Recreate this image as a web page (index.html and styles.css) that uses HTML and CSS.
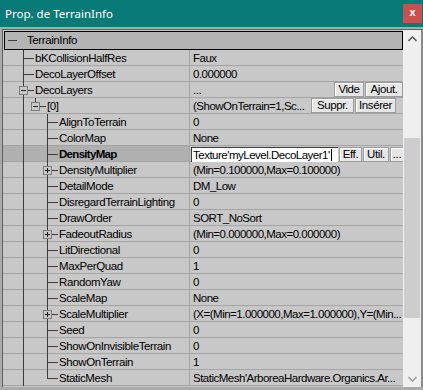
FILE: index.html
```html
<!DOCTYPE html>
<html lang="fr">

<head>
    <meta charset="UTF-8">
    <title>Prop. de TerrainInfo</title>
    <link rel="stylesheet" href="styles.css">
</head>

<body>
    <div class="window">
        <div class="titlebar">
            <span class="title">Prop. de TerrainInfo</span>
            <span class="close">x</span>
        </div>

        <div class="frame">
            <div class="grid">
                <div class="list">
                    <div class="category"><span class="collapse"></span>TerrainInfo</div>

                    <div class="row">
                        <div class="name"><span class="g t"></span><span class="stub"></span><span class="lbl">bKCollisionHalfRes</span></div>
                        <div class="val"><span class="vtext">Faux</span></div>
                    </div>
                    <div class="row">
                        <div class="name"><span class="g t"></span><span class="stub"></span><span class="lbl">DecoLayerOffset</span></div>
                        <div class="val"><span class="vtext">0.000000</span></div>
                    </div>
                    <div class="row">
                        <div class="name"><span class="g t"><span class="box"></span></span><span class="stub"></span><span class="lbl">DecoLayers</span></div>
                        <div class="val"><span class="vtext">...</span><span class="btn w-vide">Vide</span><span class="btn w-ajout">Ajout.</span></div>
                    </div>
                    <div class="row">
                        <div class="name"><span class="g v"></span><span class="g l"><span class="box"></span></span><span class="stub"></span><span class="lbl">[0]</span></div>
                        <div class="val"><span class="vtext">(ShowOnTerrain=1,Sc...</span><span class="btn w-suppr">Suppr.</span><span class="btn w-inserer">Insérer</span></div>
                    </div>
                    <div class="row">
                        <div class="name"><span class="g v"></span><span class="g"></span><span class="g t"></span><span class="stub"></span><span class="lbl">AlignToTerrain</span></div>
                        <div class="val"><span class="vtext">0</span></div>
                    </div>
                    <div class="row">
                        <div class="name"><span class="g v"></span><span class="g"></span><span class="g t"></span><span class="stub"></span><span class="lbl">ColorMap</span></div>
                        <div class="val"><span class="vtext">None</span></div>
                    </div>
                    <div class="row selected">
                        <div class="name"><span class="g v"></span><span class="g"></span><span class="g t"></span><span class="stub"></span><span class="lbl">DensityMap</span></div>
                        <div class="val">
                            <span class="edit">Texture'myLevel.DecoLayer1'<span class="caret"></span></span>
                            <span class="btn w-eff">Eff.</span><span class="btn w-util">Util.</span><span class="btn w-dots">...</span>
                        </div>
                    </div>
                    <div class="row">
                        <div class="name"><span class="g v"></span><span class="g"></span><span class="g t"><span class="box plus"></span></span><span class="stub"></span><span class="lbl">DensityMultiplier</span></div>
                        <div class="val"><span class="vtext">(Min=0.100000,Max=0.100000)</span></div>
                    </div>
                    <div class="row">
                        <div class="name"><span class="g v"></span><span class="g"></span><span class="g t"></span><span class="stub"></span><span class="lbl">DetailMode</span></div>
                        <div class="val"><span class="vtext">DM_Low</span></div>
                    </div>
                    <div class="row">
                        <div class="name"><span class="g v"></span><span class="g"></span><span class="g t"></span><span class="stub"></span><span class="lbl">DisregardTerrainLighting</span></div>
                        <div class="val"><span class="vtext">0</span></div>
                    </div>
                    <div class="row">
                        <div class="name"><span class="g v"></span><span class="g"></span><span class="g t"></span><span class="stub"></span><span class="lbl">DrawOrder</span></div>
                        <div class="val"><span class="vtext">SORT_NoSort</span></div>
                    </div>
                    <div class="row">
                        <div class="name"><span class="g v"></span><span class="g"></span><span class="g t"><span class="box plus"></span></span><span class="stub"></span><span class="lbl">FadeoutRadius</span></div>
                        <div class="val"><span class="vtext">(Min=0.000000,Max=0.000000)</span></div>
                    </div>
                    <div class="row">
                        <div class="name"><span class="g v"></span><span class="g"></span><span class="g t"></span><span class="stub"></span><span class="lbl">LitDirectional</span></div>
                        <div class="val"><span class="vtext">0</span></div>
                    </div>
                    <div class="row">
                        <div class="name"><span class="g v"></span><span class="g"></span><span class="g t"></span><span class="stub"></span><span class="lbl">MaxPerQuad</span></div>
                        <div class="val"><span class="vtext">1</span></div>
                    </div>
                    <div class="row">
                        <div class="name"><span class="g v"></span><span class="g"></span><span class="g t"></span><span class="stub"></span><span class="lbl">RandomYaw</span></div>
                        <div class="val"><span class="vtext">0</span></div>
                    </div>
                    <div class="row">
                        <div class="name"><span class="g v"></span><span class="g"></span><span class="g t"></span><span class="stub"></span><span class="lbl">ScaleMap</span></div>
                        <div class="val"><span class="vtext">None</span></div>
                    </div>
                    <div class="row">
                        <div class="name"><span class="g v"></span><span class="g"></span><span class="g t"><span class="box plus"></span></span><span class="stub"></span><span class="lbl">ScaleMultiplier</span></div>
                        <div class="val"><span class="vtext">(X=(Min=1.000000,Max=1.000000),Y=(Min...</span></div>
                    </div>
                    <div class="row">
                        <div class="name"><span class="g v"></span><span class="g"></span><span class="g t"></span><span class="stub"></span><span class="lbl">Seed</span></div>
                        <div class="val"><span class="vtext">0</span></div>
                    </div>
                    <div class="row">
                        <div class="name"><span class="g v"></span><span class="g"></span><span class="g t"></span><span class="stub"></span><span class="lbl">ShowOnInvisibleTerrain</span></div>
                        <div class="val"><span class="vtext">0</span></div>
                    </div>
                    <div class="row">
                        <div class="name"><span class="g v"></span><span class="g"></span><span class="g t"></span><span class="stub"></span><span class="lbl">ShowOnTerrain</span></div>
                        <div class="val"><span class="vtext">1</span></div>
                    </div>
                    <div class="row">
                        <div class="name"><span class="g v"></span><span class="g"></span><span class="g l"></span><span class="stub"></span><span class="lbl">StaticMesh</span></div>
                        <div class="val"><span class="vtext">StaticMesh'ArboreaHardware.Organics.Ar...</span></div>
                    </div>
                </div>

                <div class="scroll">
                    <div class="arrow">
                        <svg width="9" height="6" viewBox="0 0 9 6"><polyline points="0.5,5 4.5,1 8.5,5" fill="none" stroke="#606060" stroke-width="1.6"/></svg>
                    </div>
                    <div class="track"><div class="thumb"></div></div>
                    <div class="arrow">
                        <svg width="9" height="6" viewBox="0 0 9 6"><polyline points="0.5,1 4.5,5 8.5,1" fill="none" stroke="#a0a0a0" stroke-width="1.6"/></svg>
                    </div>
                </div>
            </div>
        </div>
    </div>
</body>

</html>
```

FILE: styles.css
```css
* {
    margin: 0px;
    padding: 0px;
    box-sizing: border-box;
}

body {
    width: 423px;
    height: 390px;
    overflow: hidden;
    background-color: #b4b4b4;
    font-family: "Liberation Sans", Arial, sans-serif;
    font-size: 11.5px;
    letter-spacing: -0.4px;
    color: #000;
}

.window {
    width: 423px;
    height: 390px;
    display: flex;
    flex-direction: column;
}

/* barre de titre */
.titlebar {
    height: 27px;
    flex: none;
    background-color: #087a78;
    color: #fff;
    display: flex;
    justify-content: space-between;
    align-items: flex-start;
}

.title {
    font-family: "Noto Sans", "Liberation Sans", sans-serif;
    font-size: 11.5px;
    letter-spacing: 0px;
    line-height: 27px;
    padding-left: 5px;
}

.close {
    width: 19px;
    height: 19px;
    margin-top: 4px;
    margin-right: 1px;
    background-color: #c75050;
    color: #fff;
    font-weight: bold;
    font-size: 11px;
    letter-spacing: 0px;
    line-height: 17px;
    text-align: center;
}

.frame {
    flex: 1;
    min-height: 0;
    display: flex;
    padding: 2px 0px 3px 2px;
    background-color: #ababab;
}

.grid {
    flex: 1;
    min-height: 0;
    display: flex;
    overflow: hidden;
    background-color: #c8c8c8;
    border-left: 1px solid #5f5f5f;
    border-top: 1px solid #5f5f5f;
    border-right: 2px solid #8a8a8a;
}

.list {
    width: 400px;
    flex: none;
    padding-top: 1px;
}

/* categorie */
.category {
    height: 19px;
    margin-left: 1px;
    border: 1px solid #000;
    background-color: #b4b4b4;
    display: flex;
    align-items: center;
    line-height: 17px;
}

.collapse {
    width: 9px;
    height: 1px;
    margin: 0px 10px 0px 3px;
    background-color: #3c3c3c;
}

/* lignes */
.row {
    height: 16px;
    display: flex;
    background: linear-gradient(#a4a4a4, #a4a4a4) left bottom / 100% 1px no-repeat, #c8c8c8;
}

.name {
    width: 186px;
    flex: none;
    display: flex;
    padding-left: 14px;
    overflow: hidden;
}

.selected .name {
    background: linear-gradient(#a4a4a4, #a4a4a4) left bottom / 100% 1px no-repeat, #b0b0b0;
}

.selected .lbl {
    font-weight: bold;
    letter-spacing: -0.7px;
}

.g {
    width: 12px;
    height: 16px;
    flex: none;
}

.g.v {
    background: linear-gradient(#3c3c3c, #3c3c3c) 6px 0px / 1px 100% no-repeat;
}

.g.t {
    background:
        linear-gradient(#3c3c3c, #3c3c3c) 6px 8px / 6px 1px no-repeat,
        linear-gradient(#3c3c3c, #3c3c3c) 6px 0px / 1px 100% no-repeat;
}

.g.l {
    background:
        linear-gradient(#3c3c3c, #3c3c3c) 6px 8px / 6px 1px no-repeat,
        linear-gradient(#3c3c3c, #3c3c3c) 6px 0px / 1px 9px no-repeat;
}

.stub {
    width: 5px;
    flex: none;
    background: linear-gradient(#3c3c3c, #3c3c3c) 0px 8px / 100% 1px no-repeat;
}

.box {
    display: block;
    width: 9px;
    height: 9px;
    margin: 4px 0px 0px 2px;
    border: 1px solid #7c7c7c;
    background: linear-gradient(#1e1e1e, #1e1e1e) center / 5px 1px no-repeat, #c8c8c8;
}

.box.plus {
    background:
        linear-gradient(#1e1e1e, #1e1e1e) center / 5px 1px no-repeat,
        linear-gradient(#1e1e1e, #1e1e1e) center / 1px 5px no-repeat,
        #c8c8c8;
}

.lbl {
    padding-left: 1px;
    line-height: 16px;
    white-space: nowrap;
}

.val {
    flex: 1;
    min-width: 0;
    display: flex;
    align-items: flex-start;
    border-left: 1px solid #a4a4a4;
}

.vtext {
    flex: 1;
    min-width: 0;
    padding-left: 3px;
    line-height: 16px;
    letter-spacing: -0.5px;
    white-space: nowrap;
    overflow: hidden;
}

/* boutons */
.btn {
    height: 15px;
    flex: none;
    margin-left: 1px;
    background-color: #e6e6e6;
    border: 1px solid #9c9c9c;
    box-shadow: inset 1px 1px 0px #fff;
    line-height: 13px;
    text-align: center;
    white-space: nowrap;
}

.w-vide { width: 30px; }
.w-ajout { width: 38px; }
.w-suppr { width: 43px; }
.w-inserer { width: 41px; margin-right: 7px; }
.w-eff { width: 23px; }
.w-util { width: 26px; }
.w-dots { width: 14px; }

.edit {
    width: 147px;
    height: 15px;
    flex: none;
    margin: 1px 0px 0px 1px;
    padding-left: 1px;
    background-color: #fff;
    border-top: 1px solid #3a3a3a;
    border-left: 1px solid #3a3a3a;
    line-height: 13px;
    letter-spacing: -0.5px;
    white-space: nowrap;
    overflow: hidden;
    display: flex;
    align-items: center;
}

.caret {
    width: 1px;
    height: 12px;
    margin-left: 1px;
    background-color: #000;
}

.selected .btn {
    margin-top: 1px;
}

/* barre de defilement */
.scroll {
    width: 18px;
    flex: none;
    display: flex;
    flex-direction: column;
    background-color: #f0f0f0;
}

.arrow {
    height: 17px;
    flex: none;
    display: flex;
    align-items: center;
    justify-content: center;
}

.track {
    flex: 1;
    padding: 91px 1px 0px 1px;
}

.thumb {
    height: 180px;
    background-color: #cdcdcd;
}
```
